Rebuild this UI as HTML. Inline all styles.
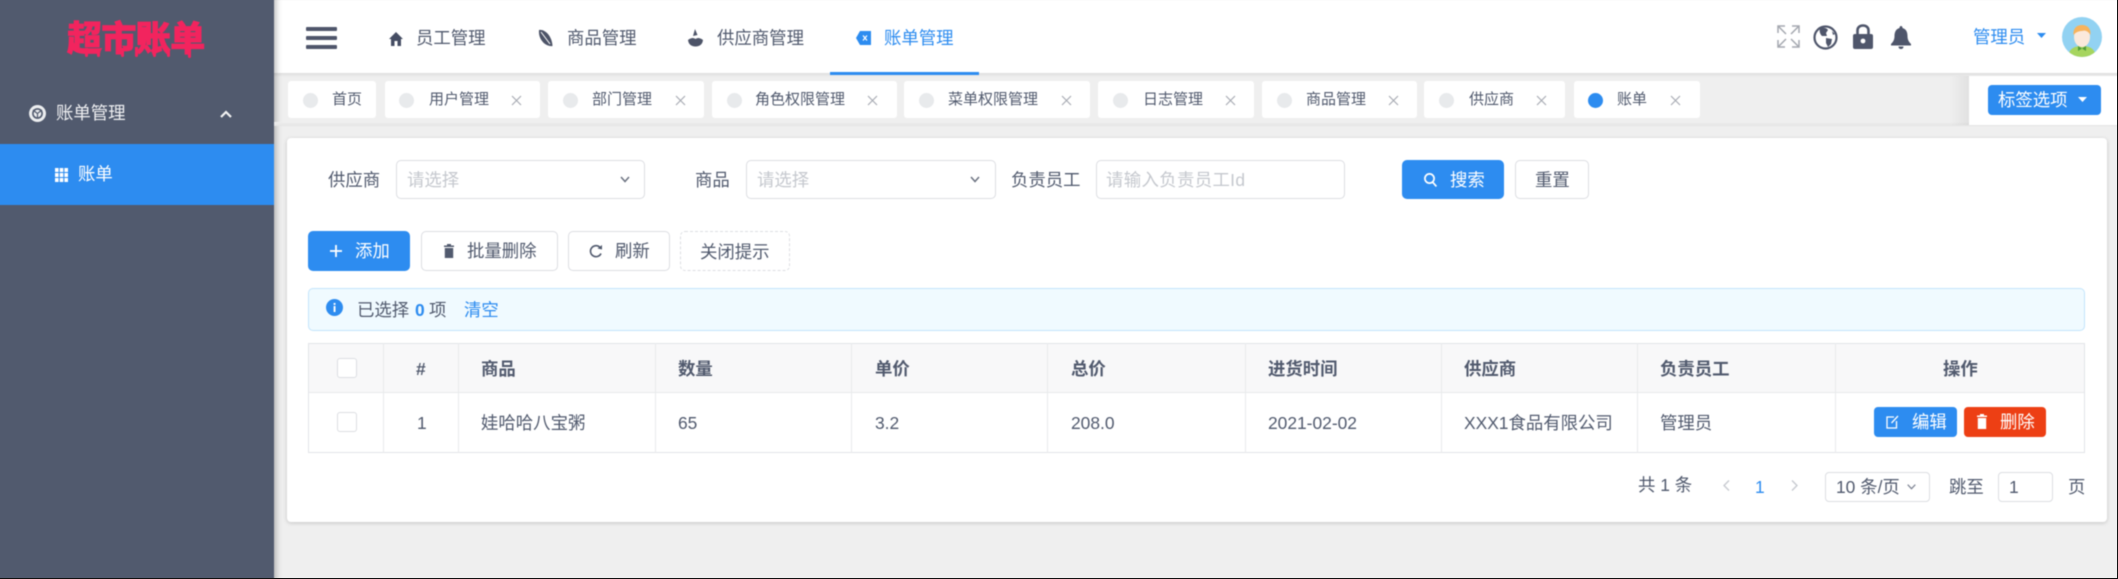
<!DOCTYPE html>
<html lang="zh-CN">
<head>
<meta charset="utf-8">
<title>账单管理</title>
<style>
html{margin:0;padding:0;width:2118px;height:579px;overflow:hidden;background:#efefef}
body{margin:0;padding:0;position:relative;width:2118px;height:579px;overflow:hidden;background:#efefef;contain:paint}
#root{position:absolute;left:-6px;top:-6px;width:2130px;height:591px;overflow:hidden;background:#efefef;font-family:"Liberation Sans","Noto Sans CJK SC",sans-serif;color:#515a6e;font-size:17.4px;filter:blur(.55px)}
#in{position:absolute;left:6px;top:6px;width:2118px;height:579px}
.b{position:absolute;box-sizing:border-box}
.t{position:absolute;white-space:nowrap;line-height:24px;height:24px}
svg{position:absolute;overflow:visible}
.tab{position:absolute;top:81px;height:37px;background:#fff;border-radius:3px}
.dot{position:absolute;top:93px;width:15px;height:15px;border-radius:50%;background:#e8eaec}
.tt{position:absolute;top:88px;line-height:24px;font-size:15px;white-space:nowrap;color:#515a6e}
.inp{position:absolute;top:160px;height:39px;box-sizing:border-box;background:#fff;border:1px solid #dcdee2;border-radius:5px}
.btn{position:absolute;box-sizing:border-box;top:231px;height:40px;background:#fff;border:1px solid #dcdee2;border-radius:5px}
.ph{color:#c5c8ce}
.th{font-weight:700;color:#515a6e}
.vl{position:absolute;top:343px;height:110px;width:1px;background:#e8eaec}
.cb{position:absolute;box-sizing:border-box;width:20px;height:20px;background:#fff;border:1px solid #dcdee2;border-radius:3px;left:337px}
.dr{position:absolute;width:3px;background:#f2245e;border-radius:0 0 2px 2px}
</style>
</head>
<body>
<div id="root"><div id="in">

<!-- main header -->
<div class="b" style="left:274px;top:0;width:1850px;height:74px;background:#fff"></div>
<div class="b" style="left:274px;top:73px;width:1850px;height:4px;background:linear-gradient(#dedede,#efefef)"></div>

<!-- hamburger -->
<div class="b" style="left:306px;top:27px;width:31px;height:4px;background:#4f566b;border-radius:1px"></div>
<div class="b" style="left:306px;top:36px;width:31px;height:4px;background:#4f566b;border-radius:1px"></div>
<div class="b" style="left:306px;top:45px;width:31px;height:4px;background:#4f566b;border-radius:1px"></div>

<!-- top nav -->
<svg style="left:389px;top:32px" width="14" height="14" viewBox="0 0 14 14"><path d="M7 0 L14 7 L12 7 L12 14 L8.5 14 L8.5 9 L5.5 9 L5.5 14 L2 14 L2 7 L0 7 Z" fill="#454d63"/></svg>
<span class="t" style="left:416px;top:26px">员工管理</span>
<svg style="left:538px;top:29px" width="15" height="18" viewBox="0 0 15 18"><path d="M1 1 C7 0 14 7 14.5 17 C8 18 0 11 1 1 Z" fill="#4d5468"/><path d="M3 3 L12 15" stroke="#fff" stroke-width="1"/></svg>
<span class="t" style="left:567px;top:26px">商品管理</span>
<svg style="left:688px;top:29px" width="15" height="18" viewBox="0 0 15 18"><path d="M7 0 L9.5 6 L5 7 Z" fill="#4d5468"/><path d="M0 11 C4 8 6 9 7.5 10 C9 9 11 8 15 11 C14.5 15 12 17.5 7.5 17.5 C3 17.5 0.5 15 0 11 Z" fill="#4d5468"/></svg>
<span class="t" style="left:717px;top:26px">供应商管理</span>
<svg style="left:856px;top:31px" width="15" height="14" viewBox="0 0 15 14"><path d="M4 0 H15 V14 H4 L0 7 Z" fill="#2d8cf0"/><path d="M7 4.5 L11 9.5 M11 4.5 L7 9.5" stroke="#fff" stroke-width="1.2"/></svg>
<span class="t" style="left:884px;top:26px;color:#2d8cf0">账单管理</span>
<div class="b" style="left:830px;top:72px;width:149px;height:3px;background:#2d8cf0"></div>

<!-- right icons -->
<svg style="left:1777px;top:25px" width="23" height="23" viewBox="0 0 23 23" fill="none" stroke="#a5a8b0" stroke-width="1.5"><path d="M1 8 V1 H8 M1 1 L9 9 M15 1 H22 V8 M22 1 L14 9 M1 15 V22 H8 M1 22 L9 14 M22 15 V22 H15 M22 22 L14 14"/></svg>
<svg style="left:1813px;top:25px" width="25" height="25" viewBox="0 0 25 25"><circle cx="12.5" cy="12.5" r="11" fill="#fff" stroke="#4f566b" stroke-width="2.2"/><path d="M7 3 C10 2 14 3 15 5 L13 8 L14 11 L9 11 C7 9 6 6 7 3 Z M13 13 L19 14 L18 19 L15 22 L13 18 Z M19 6 L22 9 L20 10 Z" fill="#4f566b"/></svg>
<svg style="left:1853px;top:24px" width="20" height="25" viewBox="0 0 20 25"><path d="M4.5 11 V6.5 C4.5 3.3 7 1.5 10 1.5 C13 1.5 15.5 3.3 15.5 6.5 V11" fill="none" stroke="#4f566b" stroke-width="2.6"/><rect x="0" y="10" width="20" height="15" rx="2" fill="#4f566b"/><circle cx="10" cy="17" r="2.4" fill="#fff"/></svg>
<svg style="left:1891px;top:26px" width="20" height="23" viewBox="0 0 20 23"><path d="M10 0 C11 0 11.5 1 11.5 2 C15 3 16.5 6 16.5 10 C16.5 14 18 16 20 18 V19.5 H0 V18 C2 16 3.5 14 3.5 10 C3.5 6 5 3 8.5 2 C8.5 1 9 0 10 0 Z M7.5 20.5 H12.5 C12.5 22 11.5 23 10 23 C8.5 23 7.5 22 7.5 20.5 Z" fill="#4f566b"/></svg>

<span class="t" style="left:1973px;top:25px;color:#2d8cf0">管理员</span>
<svg style="left:2037px;top:33px" width="9" height="5" viewBox="0 0 9 5"><path d="M0 0 H9 L4.5 5 Z" fill="#2d8cf0"/></svg>
<svg style="left:2062px;top:17px" width="40" height="40" viewBox="0 0 40 40"><defs><clipPath id="c"><circle cx="20" cy="20" r="20"/></clipPath></defs><g clip-path="url(#c)"><rect width="40" height="40" fill="#92d2f2"/><path d="M6 40 C7 31 13 29 20 29 C27 29 33 31 34 40 Z" fill="#a6d55f"/><ellipse cx="20" cy="20" rx="8" ry="10" fill="#fbe9dc"/><path d="M11.5 18 C11 10 16 8 20 8 C25 8 29 11 28.5 18 C26 14 23 13 20 14 C17 14 14 15 11.5 18 Z" fill="#f7b35c"/><path d="M16 29 L20 31.5 L24 29 V34 L20 31.5 L16 34 Z" fill="#4f9a3a"/></g></svg>

<!-- sidebar -->
<div class="b" style="left:-6px;top:-6px;width:280px;height:597px;background:#515a6e;box-shadow:2px 0 6px rgba(0,0,0,.28)"></div>
<span class="t" style="left:67px;top:15px;height:44px;line-height:44px;font-size:35px;font-weight:900;letter-spacing:-.6px;color:#f2245e;font-family:'Noto Sans CJK SC','WenQuanYi Zen Hei',sans-serif;-webkit-text-stroke:.8px #f2245e">超市账单</span>
<div class="dr" style="left:85px;top:48px;height:9px"></div>
<div class="dr" style="left:97px;top:49px;height:8px"></div>
<div class="dr" style="left:121px;top:48px;height:9px"></div>
<div class="dr" style="left:135px;top:47px;height:10px"></div>
<div class="dr" style="left:153px;top:48px;height:9px"></div>
<div class="dr" style="left:167px;top:49px;height:8px"></div>
<div class="dr" style="left:188px;top:48px;height:10px"></div>

<svg style="left:29px;top:105px" width="17" height="17" viewBox="0 0 17 17"><circle cx="8.5" cy="8.5" r="8.5" fill="#eceef0"/><circle cx="8.5" cy="8.5" r="4.6" fill="none" stroke="#515a6e" stroke-width="1.6"/><path d="M4 5 L9 9 M13 5 L9 8 M8.5 13 L8.5 8" stroke="#515a6e" stroke-width="1.2"/></svg>
<span class="t" style="left:56px;top:101px;color:#f0f1f3">账单管理</span>
<svg style="left:220px;top:110px" width="12" height="8" viewBox="0 0 12 8"><path d="M1 7 L6 2 L11 7" fill="none" stroke="#f3f3f3" stroke-width="2.2"/></svg>
<div class="b" style="left:-6px;top:144px;width:280px;height:61px;background:#2d8cf0"></div>
<svg style="left:55px;top:168px" width="13" height="14" viewBox="0 0 13 14" fill="#fff"><rect x="0" y="0" width="3.6" height="4"/><rect x="4.7" y="0" width="3.6" height="4"/><rect x="9.4" y="0" width="3.6" height="4"/><rect x="0" y="5" width="3.6" height="4"/><rect x="4.7" y="5" width="3.6" height="4"/><rect x="9.4" y="5" width="3.6" height="4"/><rect x="0" y="10" width="3.6" height="4"/><rect x="4.7" y="10" width="3.6" height="4"/><rect x="9.4" y="10" width="3.6" height="4"/></svg>
<span class="t" style="left:78px;top:162px;color:#fff">账单</span>

<!-- tag bar -->
<div class="b" style="left:274px;top:122px;width:1850px;height:4px;background:linear-gradient(#efefef,#e4e4e4)"></div>

<div class="tab" style="left:288px;width:88px"></div>
<div class="dot" style="left:303px"></div><span class="tt" style="left:332px">首页</span>

<div class="tab" style="left:385px;width:155px"></div>
<div class="dot" style="left:399px"></div><span class="tt" style="left:429px">用户管理</span>
<svg style="left:511px;top:95px" width="11" height="11" viewBox="0 0 11 11"><path d="M1 1 L10 10 M10 1 L1 10" stroke="#a9adb5" stroke-width="1.2"/></svg>

<div class="tab" style="left:548px;width:156px"></div>
<div class="dot" style="left:563px"></div><span class="tt" style="left:592px">部门管理</span>
<svg style="left:675px;top:95px" width="11" height="11" viewBox="0 0 11 11"><path d="M1 1 L10 10 M10 1 L1 10" stroke="#a9adb5" stroke-width="1.2"/></svg>

<div class="tab" style="left:712px;width:185px"></div>
<div class="dot" style="left:727px"></div><span class="tt" style="left:755px">角色权限管理</span>
<svg style="left:867px;top:95px" width="11" height="11" viewBox="0 0 11 11"><path d="M1 1 L10 10 M10 1 L1 10" stroke="#a9adb5" stroke-width="1.2"/></svg>

<div class="tab" style="left:904px;width:186px"></div>
<div class="dot" style="left:919px"></div><span class="tt" style="left:948px">菜单权限管理</span>
<svg style="left:1061px;top:95px" width="11" height="11" viewBox="0 0 11 11"><path d="M1 1 L10 10 M10 1 L1 10" stroke="#a9adb5" stroke-width="1.2"/></svg>

<div class="tab" style="left:1098px;width:156px"></div>
<div class="dot" style="left:1113px"></div><span class="tt" style="left:1143px">日志管理</span>
<svg style="left:1225px;top:95px" width="11" height="11" viewBox="0 0 11 11"><path d="M1 1 L10 10 M10 1 L1 10" stroke="#a9adb5" stroke-width="1.2"/></svg>

<div class="tab" style="left:1262px;width:155px"></div>
<div class="dot" style="left:1277px"></div><span class="tt" style="left:1306px">商品管理</span>
<svg style="left:1388px;top:95px" width="11" height="11" viewBox="0 0 11 11"><path d="M1 1 L10 10 M10 1 L1 10" stroke="#a9adb5" stroke-width="1.2"/></svg>

<div class="tab" style="left:1424px;width:141px"></div>
<div class="dot" style="left:1439px"></div><span class="tt" style="left:1469px">供应商</span>
<svg style="left:1536px;top:95px" width="11" height="11" viewBox="0 0 11 11"><path d="M1 1 L10 10 M10 1 L1 10" stroke="#a9adb5" stroke-width="1.2"/></svg>

<div class="tab" style="left:1574px;width:126px"></div>
<div class="dot" style="left:1588px;background:#2d8cf0"></div><span class="tt" style="left:1617px">账单</span>
<svg style="left:1670px;top:95px" width="11" height="11" viewBox="0 0 11 11"><path d="M1 1 L10 10 M10 1 L1 10" stroke="#a9adb5" stroke-width="1.2"/></svg>

<!-- tag options -->
<div class="b" style="left:1950px;top:76px;width:19px;height:49px;background:linear-gradient(90deg,rgba(0,0,0,0),rgba(0,0,0,.06))"></div>
<div class="b" style="left:1969px;top:76px;width:155px;height:49px;background:#fff"></div>
<div class="b" style="left:1988px;top:85px;width:113px;height:30px;background:#2d8cf0;border-radius:4px"></div>
<span class="t" style="left:1998px;top:88px;color:#fff">标签选项</span>
<svg style="left:2078px;top:97px" width="9" height="5" viewBox="0 0 9 5"><path d="M0 0 H9 L4.5 5 Z" fill="#fff"/></svg>

<!-- card -->
<div class="b" style="left:287px;top:138px;width:1820px;height:384px;background:#fff;border-radius:4px;box-shadow:0 1px 4px rgba(0,0,0,.18)"></div>

<!-- search form -->
<span class="t" style="left:328px;top:168px">供应商</span>
<div class="inp" style="left:396px;width:249px"></div>
<span class="t ph" style="left:407px;top:168px">请选择</span>
<svg style="left:620px;top:176px" width="10" height="7" viewBox="0 0 10 7"><path d="M1 1 L5 5.5 L9 1" fill="none" stroke="#6b7280" stroke-width="1.5"/></svg>

<span class="t" style="left:695px;top:168px">商品</span>
<div class="inp" style="left:746px;width:250px"></div>
<span class="t ph" style="left:757px;top:168px">请选择</span>
<svg style="left:970px;top:176px" width="10" height="7" viewBox="0 0 10 7"><path d="M1 1 L5 5.5 L9 1" fill="none" stroke="#6b7280" stroke-width="1.5"/></svg>

<span class="t" style="left:1011px;top:168px">负责员工</span>
<div class="inp" style="left:1096px;width:249px"></div>
<span class="t ph" style="left:1106px;top:168px;letter-spacing:.35px">请输入负责员工Id</span>

<div class="b" style="left:1402px;top:160px;width:102px;height:39px;background:#2d8cf0;border-radius:5px"></div>
<svg style="left:1424px;top:173px" width="13" height="14" viewBox="0 0 13 14" fill="none" stroke="#fff" stroke-width="1.7"><circle cx="5.5" cy="5.5" r="4.6"/><path d="M8.7 9.2 L12.4 13.4"/></svg>
<span class="t" style="left:1450px;top:168px;color:#fff">搜索</span>
<div class="inp" style="left:1515px;width:74px"></div>
<span class="t" style="left:1535px;top:168px">重置</span>

<!-- actions -->
<div class="b" style="left:308px;top:231px;width:102px;height:40px;background:#2d8cf0;border-radius:5px"></div>
<svg style="left:330px;top:245px" width="12" height="12" viewBox="0 0 12 12"><path d="M6 0 V12 M0 6 H12" stroke="#fff" stroke-width="1.8"/></svg>
<span class="t" style="left:355px;top:239px;color:#fff">添加</span>

<div class="btn" style="left:421px;width:137px"></div>
<svg style="left:444px;top:244px" width="10" height="14" viewBox="0 0 10 14"><path d="M3 0 H7 V1.5 H10 V3 H0 V1.5 H3 Z M0.8 4 H9.2 V14 H0.8 Z" fill="#515a6e"/></svg>
<span class="t" style="left:467px;top:239px">批量删除</span>

<div class="btn" style="left:568px;width:102px"></div>
<svg style="left:589px;top:244px" width="13" height="14" viewBox="0 0 13 14"><path d="M11.5 4 A5.5 5.5 0 1 0 12 9.5" fill="none" stroke="#515a6e" stroke-width="1.6"/><path d="M8.5 4.5 L13 5.5 L13 1 Z" fill="#515a6e"/></svg>
<span class="t" style="left:615px;top:239px">刷新</span>

<div class="btn" style="left:680px;width:110px;border-style:dashed"></div>
<span class="t" style="left:700px;top:240px">关闭提示</span>

<!-- alert -->
<div class="b" style="left:308px;top:288px;width:1777px;height:43px;background:#f0faff;border:1px solid #c3e5fb;border-radius:5px"></div>
<svg style="left:326px;top:299px" width="17" height="17" viewBox="0 0 17 17"><circle cx="8.5" cy="8.5" r="8.5" fill="#2d8cf0"/><rect x="7.6" y="7" width="1.9" height="6" fill="#fff"/><rect x="7.6" y="4" width="1.9" height="1.9" fill="#fff"/></svg>
<span class="t" style="left:357px;top:298px">已选择</span>
<span class="t" style="left:415px;top:298px;color:#2d8cf0;font-weight:700">0</span>
<span class="t" style="left:429px;top:298px">项</span>
<span class="t" style="left:464px;top:298px;color:#2d8cf0">清空</span>

<!-- table -->
<div class="b" style="left:308px;top:343px;width:1777px;height:110px;border:1px solid #e2e4e8;background:#fff"></div>
<div class="b" style="left:309px;top:344px;width:1775px;height:49px;background:#f8f8f9;border-bottom:1px solid #e8eaec"></div>
<div class="vl" style="left:383px"></div>
<div class="vl" style="left:458px"></div>
<div class="vl" style="left:655px"></div>
<div class="vl" style="left:851px"></div>
<div class="vl" style="left:1047px"></div>
<div class="vl" style="left:1245px"></div>
<div class="vl" style="left:1441px"></div>
<div class="vl" style="left:1637px"></div>
<div class="vl" style="left:1835px"></div>

<div class="cb" style="top:358px"></div>
<span class="t th" style="left:416px;top:357px">#</span>
<span class="t th" style="left:481px;top:357px">商品</span>
<span class="t th" style="left:678px;top:357px">数量</span>
<span class="t th" style="left:875px;top:357px">单价</span>
<span class="t th" style="left:1071px;top:357px">总价</span>
<span class="t th" style="left:1268px;top:357px">进货时间</span>
<span class="t th" style="left:1464px;top:357px">供应商</span>
<span class="t th" style="left:1660px;top:357px">负责员工</span>
<span class="t th" style="left:1943px;top:357px">操作</span>

<div class="cb" style="top:412px"></div>
<span class="t" style="left:417px;top:411px">1</span>
<span class="t" style="left:481px;top:411px">娃哈哈八宝粥</span>
<span class="t" style="left:678px;top:411px">65</span>
<span class="t" style="left:875px;top:411px">3.2</span>
<span class="t" style="left:1071px;top:411px">208.0</span>
<span class="t" style="left:1268px;top:411px">2021-02-02</span>
<span class="t" style="left:1464px;top:411px">XXX1食品有限公司</span>
<span class="t" style="left:1660px;top:411px">管理员</span>

<div class="b" style="left:1874px;top:407px;width:83px;height:30px;background:#2d8cf0;border-radius:4px"></div>
<svg style="left:1886px;top:415px" width="13" height="14" viewBox="0 0 13 14" fill="none" stroke="#fff" stroke-width="1.3"><path d="M8 2 H1 V13 H10.5 V6"/><path d="M5.5 8 L12 1"/></svg>
<span class="t" style="left:1912px;top:410px;color:#fff">编辑</span>
<div class="b" style="left:1964px;top:407px;width:82px;height:30px;background:#ed3f14;border-radius:4px"></div>
<svg style="left:1977px;top:414px" width="10" height="15" viewBox="0 0 10 15"><path d="M3 0 H7 V1.5 H10 V3 H0 V1.5 H3 Z M0.8 4 H9.2 V15 H0.8 Z" fill="#fff"/></svg>
<span class="t" style="left:2000px;top:410px;color:#fff">删除</span>

<!-- pagination -->
<span class="t" style="left:1638px;top:473px">共 1 条</span>
<svg style="left:1723px;top:480px" width="7" height="11" viewBox="0 0 7 11"><path d="M6 0.5 L1 5.5 L6 10.5" fill="none" stroke="#c5c8ce" stroke-width="1.3"/></svg>
<span class="t" style="left:1755px;top:475px;color:#2d8cf0">1</span>
<svg style="left:1791px;top:480px" width="7" height="11" viewBox="0 0 7 11"><path d="M1 0.5 L6 5.5 L1 10.5" fill="none" stroke="#c5c8ce" stroke-width="1.3"/></svg>
<div class="b" style="left:1825px;top:472px;width:105px;height:30px;border:1px solid #dcdee2;border-radius:4px;background:#fff"></div>
<span class="t" style="left:1836px;top:475px">10 条/页</span>
<svg style="left:1907px;top:484px" width="9" height="6" viewBox="0 0 9 6"><path d="M0.7 0.7 L4.5 4.7 L8.3 0.7" fill="none" stroke="#808695" stroke-width="1.3"/></svg>
<span class="t" style="left:1949px;top:475px">跳至</span>
<div class="b" style="left:1998px;top:472px;width:55px;height:30px;border:1px solid #dcdee2;border-radius:4px;background:#fff"></div>
<span class="t" style="left:2009px;top:475px">1</span>
<span class="t" style="left:2068px;top:475px">页</span>

</div></div>
<div style="position:absolute;left:2117px;top:0;width:1px;height:579px;background:#111"></div>
<div style="position:absolute;left:0;top:578px;width:2118px;height:1px;background:#111"></div>
</body>
</html>
